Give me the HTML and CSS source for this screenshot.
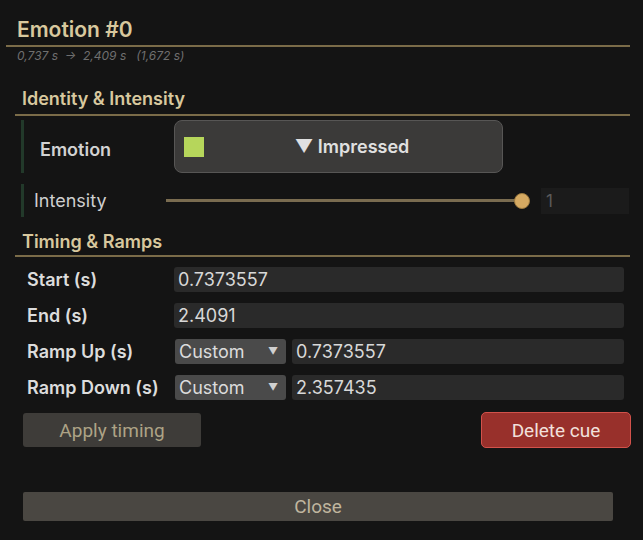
FILE: index.html
```html
<!DOCTYPE html>
<html>
<head>
<meta charset="utf-8">
<link rel="stylesheet" href="styles.css">
</head>
<body>
<div class="panel">
  <div class="title">Emotion #0</div>
  <div class="sub">0,737 s  →  2,409 s   (1,672 s)</div>

  <div class="section">
    <div class="section-head">Identity &amp; Intensity</div>
    <div class="row-emotion">
      <div class="bar"></div>
      <div class="emo-label">Emotion</div>
      <div class="dropdown">
        <span class="swatch"></span>
        <span class="dd-text">▼ Impressed</span>
      </div>
    </div>
    <div class="row-intensity">
      <div class="bar"></div>
      <div class="int-label">Intensity</div>
      <div class="slider">
        <div class="track"></div>
        <div class="knob"></div>
      </div>
      <div class="valbox">1</div>
    </div>

    <div class="section-head timing-head">Timing &amp; Ramps</div>
    <div class="grid">
      <div class="lbl">Start (s)</div>
      <div class="input">0.7373557</div>
      <div class="lbl">End (s)</div>
      <div class="input">2.4091</div>
      <div class="lbl">Ramp Up (s)</div>
      <div class="pair"><div class="combo"><span>Custom</span><span class="arr">▼</span></div><div class="input">0.7373557</div></div>
      <div class="lbl">Ramp Down (s)</div>
      <div class="pair"><div class="combo"><span>Custom</span><span class="arr">▼</span></div><div class="input">2.357435</div></div>
    </div>

    <div class="actions">
      <div class="btn apply">Apply timing</div>
      <div class="btn delete">Delete cue</div>
    </div>
  </div>
  <div class="btn close">Close</div>
</div>
</body>
</html>
```

FILE: styles.css
```css
* {
  box-sizing: border-box;
}
html, body {
  margin: 0;
  padding: 0;
  background: #141414;
  font-family: Inter, "Noto Sans", sans-serif;
  overflow: hidden;
}
.panel {
  width: 624px;
  margin-left: 6px;
  padding-top: 17px;
}
.title {
  padding-left: 11px;
  font-size: 21px;
  line-height: 25px;
  font-weight: 600;
  color: #d8c89e;
  padding-bottom: 3px;
  border-bottom: 2px solid #7b6c49;
}
.sub {
  margin-top: 2px;
  padding-left: 11px;
  font-size: 12px;
  line-height: 14px;
  font-style: italic;
  color: #6f6f6f;
  white-space: pre;
}
.section {
  margin-left: 9px;
}
.section-head {
  margin-top: 25px;
  padding-left: 7px;
  font-size: 18px;
  line-height: 22px;
  font-weight: 600;
  color: #d8c89e;
  padding-bottom: 4px;
  border-bottom: 2px solid #7b6c49;
}
.timing-head {
  margin-top: 14px;
  padding-bottom: 2px;
}
.bar {
  width: 3px;
  align-self: stretch;
  background: #22392a;
}
.row-emotion {
  margin-top: 4px;
  height: 53px;
  display: flex;
  align-items: center;
  padding-left: 6px;
}
.emo-label {
  margin-left: 16px;
  margin-top: 6px;
  width: 134px;
  font-size: 18px;
  font-weight: 600;
  color: #d2d2d2;
}
.dropdown {
  width: 329px;
  height: 53px;
  background: #3b3a39;
  border: 1px solid #575655;
  border-radius: 8px;
  display: flex;
  align-items: center;
  padding-left: 9px;
}
.swatch {
  width: 20px;
  height: 20px;
  background: #b6d65b;
}
.dd-text {
  flex: 1;
  text-align: center;
  font-size: 18px;
  font-weight: 600;
  color: #e0e0e0;
  padding-right: 2px;
}
.row-intensity {
  margin-top: 11px;
  height: 33px;
  display: flex;
  align-items: center;
  padding-left: 6px;
}
.int-label {
  margin-left: 10px;
  width: 132px;
  font-size: 18px;
  color: #cfcfcf;
}
.slider {
  position: relative;
  width: 364px;
  height: 18px;
  display: flex;
  align-items: center;
}
.track {
  width: 356px;
  height: 3px;
  background: #7a6c50;
}
.knob {
  position: absolute;
  left: 348px;
  top: 1px;
  width: 16px;
  height: 16px;
  border-radius: 50%;
  background: #d6aa62;
  border: 1px solid #9c7a3f;
}
.valbox {
  margin-left: 11px;
  width: 88px;
  height: 26px;
  background: #1b1b1b;
  color: #5a5a5a;
  font-size: 17px;
  line-height: 26px;
  padding-left: 5px;
}
.grid {
  margin-top: 10px;
  display: grid;
  grid-template-columns: 147px 450px;
  grid-auto-rows: 25px;
  row-gap: 11px;
  padding-left: 12px;
}
.lbl {
  font-size: 18px;
  font-weight: 600;
  color: #dcdcdc;
  line-height: 25px;
}
.input {
  background: #2a2a2a;
  border-radius: 3px;
  color: #d8d8d8;
  font-size: 18px;
  line-height: 25px;
  padding-left: 4px;
}
.pair {
  display: flex;
  gap: 6px;
}
.pair .input {
  flex: 1;
}
.combo {
  margin-left: 1px;
  width: 111px;
  background: #4a4a4a;
  border-radius: 3px;
  color: #dcdcdc;
  font-size: 18px;
  line-height: 25px;
  padding-left: 4px;
  padding-right: 8px;
  display: flex;
  justify-content: space-between;
}
.arr {
  font-size: 10px;
  color: #d0d0d0;
}
.actions {
  margin-top: 12px;
  display: flex;
  justify-content: space-between;
  align-items: center;
  margin-left: 8px;
  margin-right: -1px;
}
.btn {
  font-family: Roboto, "Liberation Sans", sans-serif;
  font-size: 19px;
  display: flex;
  align-items: center;
  justify-content: center;
}
.apply {
  width: 178px;
  height: 34px;
  background: #3e3c39;
  color: #ada386;
  border-radius: 3px;
}
.delete {
  width: 150px;
  height: 36px;
  background: #98302b;
  border: 1px solid #d2524b;
  border-radius: 5px;
  color: #f2e0dc;
}
.close {
  margin-top: 44px;
  margin-left: 17px;
  width: 590px;
  height: 29px;
  background: #4a4742;
  color: #c0b69f;
  border-radius: 2px;
}
```
